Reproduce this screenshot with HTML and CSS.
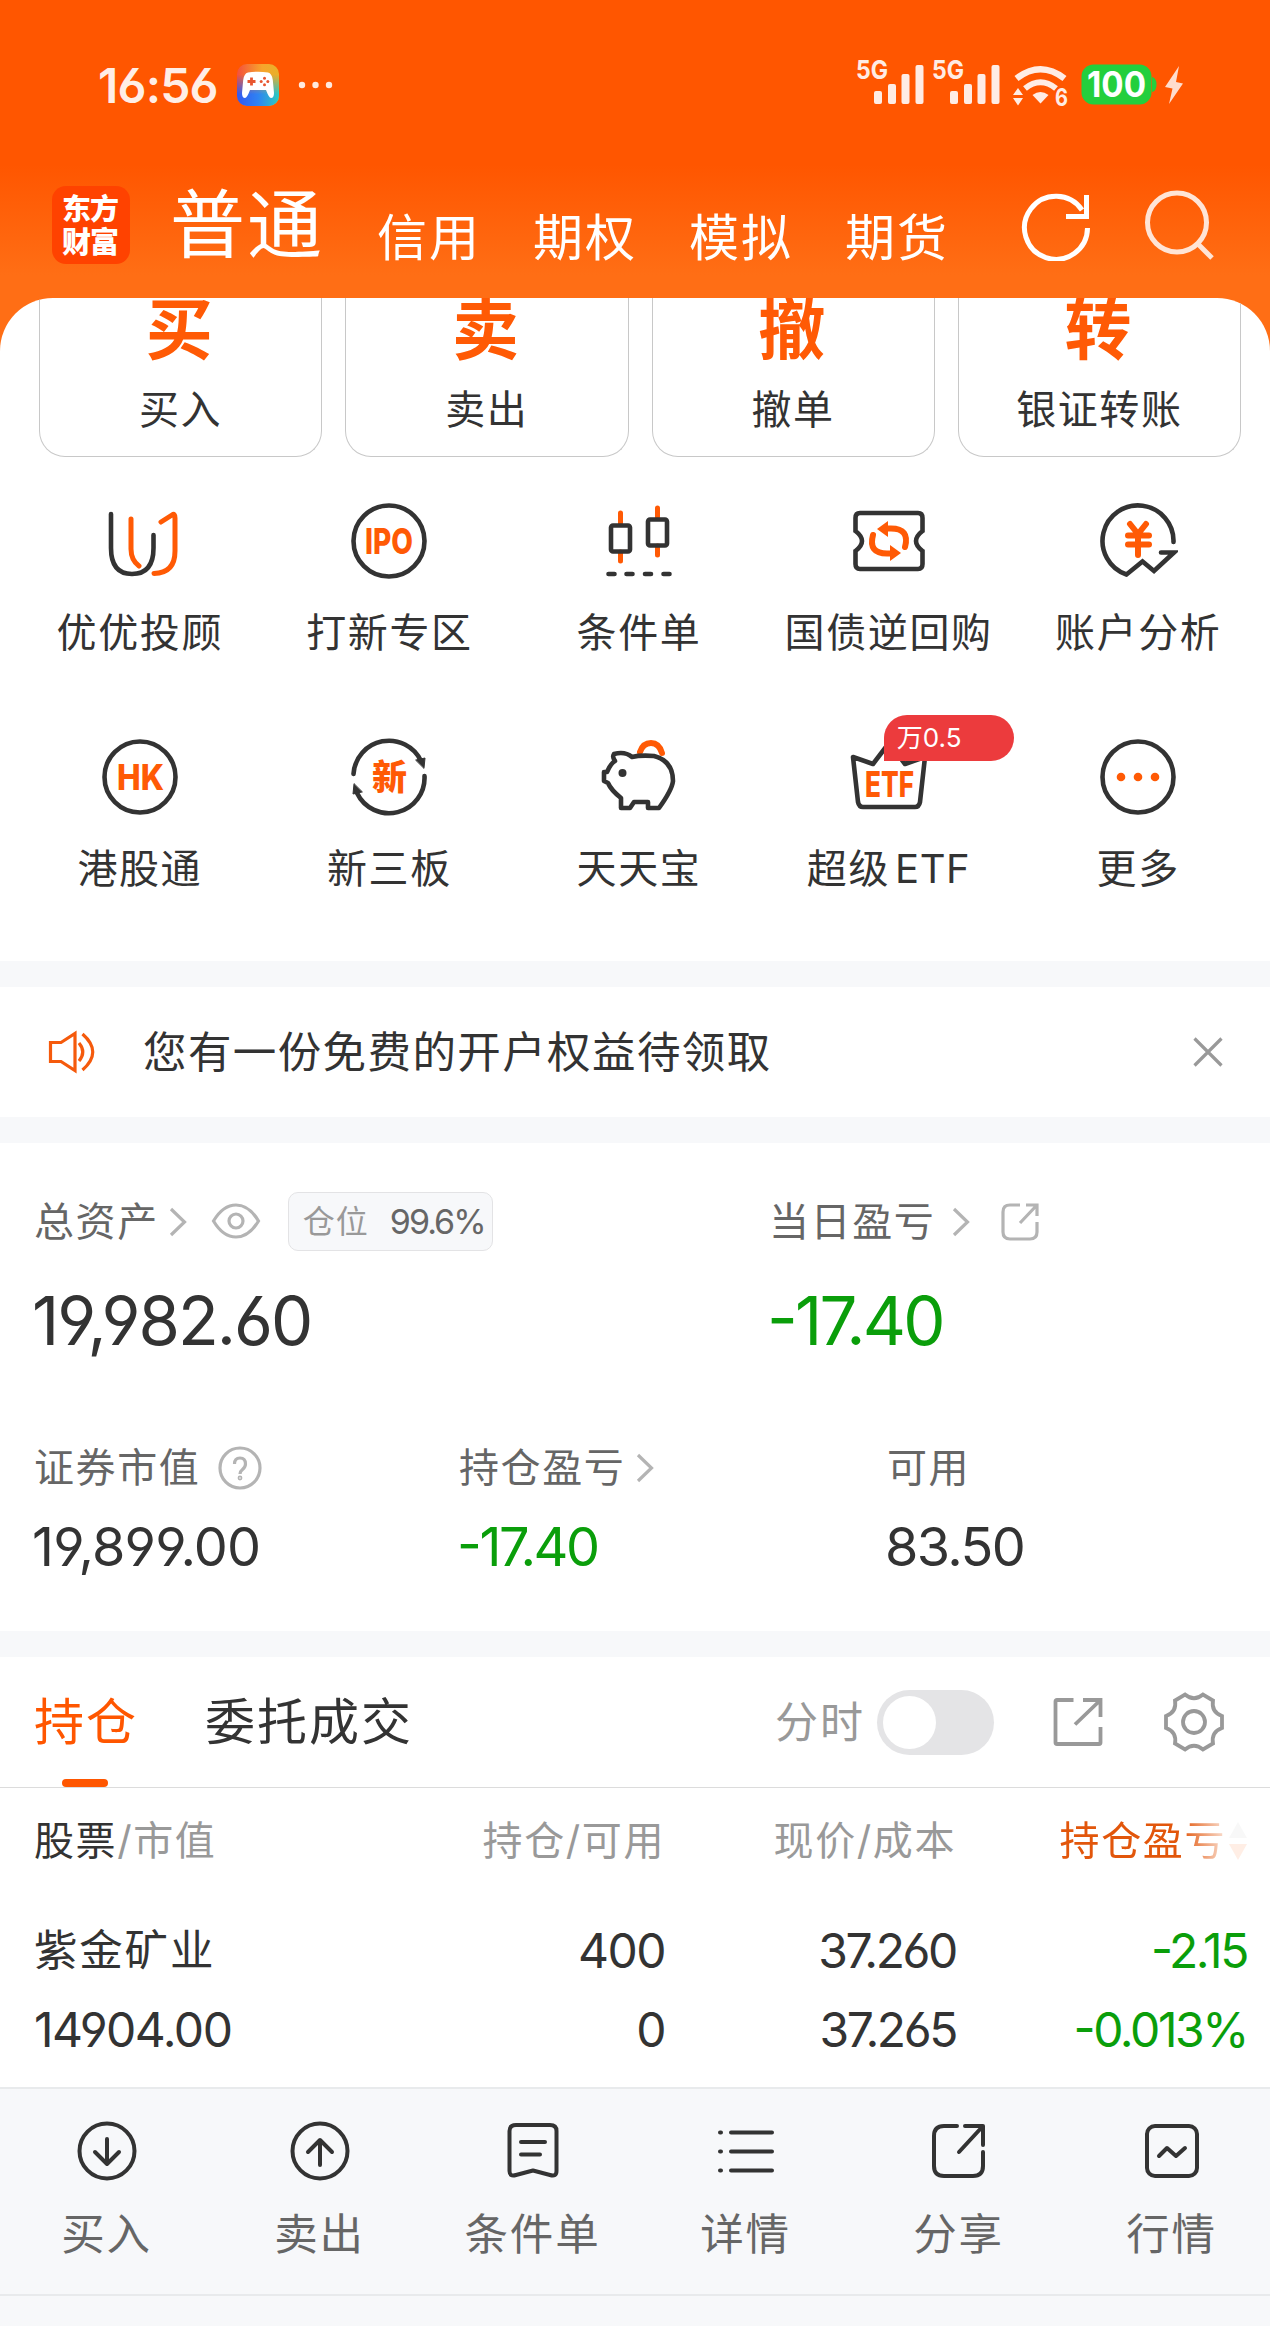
FILE: index.html
```html
<!DOCTYPE html>
<html lang="zh-CN">
<head>
<meta charset="utf-8">
<title>东方财富 交易</title>
<link rel="stylesheet" href="styles.css">
</head>
<body>
<div class="page">
  <header class="top">
    <div class="status">
      <span class="time">16:56</span>
      <svg class="game" viewBox="0 0 42 42" width="42" height="42">
        <defs>
          <linearGradient id="gw" x1="0" y1="0" x2="1" y2="0"><stop offset="0" stop-color="#f4503c"/><stop offset=".6" stop-color="#f7a52c"/><stop offset="1" stop-color="#e8b02a"/></linearGradient>
          <linearGradient id="gc" x1="0" y1="0" x2="1" y2="0"><stop offset="0" stop-color="#3358f0"/><stop offset=".5" stop-color="#2f83f2"/><stop offset="1" stop-color="#2ccbc0"/></linearGradient>
          <linearGradient id="gm" x1="0" y1="0" x2="0" y2="1"><stop offset=".25" stop-color="#fff" stop-opacity="0"/><stop offset=".72" stop-color="#fff"/></linearGradient>
          <mask id="mk"><rect width="42" height="42" fill="url(#gm)"/></mask>
        </defs>
        <rect width="42" height="42" rx="10" fill="url(#gw)"/>
        <rect width="42" height="42" rx="10" fill="url(#gc)" mask="url(#mk)"/>
        <path d="M11 8.500Q21 7 31 8.500Q35 9.500 35.800 16L37 29Q37 34 34 34Q32 34 29 26H13Q10 34 8 34Q5 34 5 29L6.200 16Q7 9.500 11 8.500Z" fill="#fff"/>
        <path d="M14.500 13.500v8M10.500 17.500h8" stroke="#e8562f" stroke-width="2.800"/>
        <g fill="#e8562f"><circle cx="27.500" cy="14.200" r="1.500"/><circle cx="27.500" cy="20.800" r="1.500"/><circle cx="24.200" cy="17.500" r="1.500"/><circle cx="30.800" cy="17.500" r="1.500"/></g>
      </svg>
      <svg class="dots" viewBox="0 0 36 8" width="36" height="8" fill="#ffe9df"><circle cx="4" cy="4" r="3.200"/><circle cx="17.500" cy="4" r="3.200"/><circle cx="31" cy="4" r="3.200"/></svg>
      <svg class="signals" viewBox="858 44 330 78" width="330" height="78" fill="#ffece4">
        <text class="net" x="858" y="79" textLength="32" lengthAdjust="spacingAndGlyphs">5G</text>
        <rect x="876" y="91" width="8" height="13" rx="2"/><rect x="890" y="84" width="8" height="20" rx="2"/><rect x="903.500" y="74" width="8" height="30" rx="2"/><rect x="917.500" y="65" width="8" height="39" rx="2"/>
        <text class="net" x="934" y="79" textLength="32" lengthAdjust="spacingAndGlyphs">5G</text>
        <rect x="952" y="91" width="8" height="13" rx="2"/><rect x="966" y="84" width="8" height="20" rx="2"/><rect x="979.500" y="74" width="8" height="30" rx="2"/><rect x="993.500" y="65" width="8" height="39" rx="2"/>
        <path d="M1018.500 78.500Q1042.500 60 1066.500 78.500" fill="none" stroke="#ffece4" stroke-width="6.500"/>
        <path d="M1027 88.500Q1042.500 76 1058 88.500" fill="none" stroke="#ffece4" stroke-width="6"/>
        <path d="M1034.500 95Q1042.500 89 1050.500 95L1042.500 103.500Z"/>
        <path d="M1015 95L1020 88L1025 95ZM1015 98L1020 105.500L1025 98Z"/>
        <text class="six" x="1057" y="106" textLength="13" lengthAdjust="spacingAndGlyphs">6</text>
        <rect x="1083.500" y="64.500" width="70" height="40" rx="12" fill="#23cf3d"/><path d="M1154 77q4.500 1 4.500 7.500t-4.500 7.500z" fill="#23cf3d"/>
        <text class="bat" x="1089" y="97" textLength="59" lengthAdjust="spacingAndGlyphs">100</text>
        <path d="M1181 66L1167 87L1174.500 88.500L1171 104L1185 83.500L1178 82Z" fill="#ffdccd"/>
      </svg>
    </div>
    <nav class="nav">
      <div class="logo"><span>东方</span><span>财富</span></div>
      <span class="nav-main">普通</span>
      <span class="nav-item">信用</span>
      <span class="nav-item">期权</span>
      <span class="nav-item">模拟</span>
      <span class="nav-item">期货</span>
      <svg class="refresh" viewBox="0 0 70 70" width="70" height="70" fill="none" stroke="#fff" stroke-width="5"><path d="M66.500 37A31.500 31.500 0 1 1 61 19"/><path d="M65.500 4V25.500H45"/></svg>
      <svg class="search" viewBox="0 0 72 72" width="72" height="72" fill="none" stroke="#ffe4d6" stroke-width="5"><circle cx="32" cy="33.500" r="29.500"/><path d="M53 55L67 69"/></svg>
    </nav>
  </header>

  <main class="sheet">
    <div class="cards">
      <div class="card"><b>买</b><span>买入</span></div>
      <div class="card"><b>卖</b><span>卖出</span></div>
      <div class="card"><b>撤</b><span>撤单</span></div>
      <div class="card"><b>转</b><span>银证转账</span></div>
    </div>
    <div class="grid">
      <div class="cell"><svg class="ico" viewBox="-40 -40 80 80"><path d="M-29-27V7Q-29 33-8 33Q13.500 33 13.500 7V-6"/><path class="o" d="M-9-22V8Q-9 19-1 25M21-19L32-26Q35-28 35-23V10Q35 32 14 32.500"/></svg><span>优优投顾</span></div>
      <div class="cell"><svg class="ico" viewBox="-40 -40 80 80"><circle r="35.500"/><text x="-24" y="12.500" class="it" textLength="48" lengthAdjust="spacingAndGlyphs">IPO</text></svg><span>打新专区</span></div>
      <div class="cell"><svg class="ico" viewBox="-40 -40 80 80"><path class="o" d="M-18.500-28V-17M-18.500 11V20M18.500-33V-24M18.500 5V14"/><rect x="-28" y="-15.500" width="19" height="26" rx="2"/><rect x="9" y="-21.500" width="19" height="26" rx="2"/><path d="M-30.500 33h6M-12.500 33h6M6 33h6M24.500 33h6"/></svg><span>条件单</span></div>
      <div class="cell"><svg class="ico" viewBox="-40 -40 80 80"><path d="M-29-28H29Q33.500-28 33.500-23V-10Q27-5 27 0Q27 5 33.500 10V23Q33.500 28 29 28H-29Q-33.500 28-33.500 23V10Q-27 5-27 0Q-27-5-33.500-10V-23Q-33.500-28-29-28Z"/><path class="o thick" d="M-16-6Q-21 12.500-2 12.500H3M16 6Q21-12.500 2-12.500H-3"/><path class="of" d="M1 4L12 12L1 20ZM-1-4L-12-12L-1-20Z"/></svg><span>国债逆回购</span></div>
      <div class="cell"><svg class="ico" viewBox="-40 -40 80 80"><path d="M35.500 1A35.500 35.500 0 1 0-11.500 33.500L4.500 20.500L16 30L36 11.500H23"/><path class="o thick" d="M-8-17L0-7L8-17M0-7V14M-10-5.500H11M-10 3.500H11"/></svg><span>账户分析</span></div>
      <div class="cell"><svg class="ico" viewBox="-40 -40 80 80"><circle r="35.500"/><text x="-23" y="12.500" class="it" textLength="47" lengthAdjust="spacingAndGlyphs">HK</text></svg><span>港股通</span></div>
      <div class="cell"><svg class="ico" viewBox="-40 -40 80 80"><path d="M-35.500-3A35.500 35.500 0 0 1 32-16M35.500-1A35.500 35.500 0 0 1-32 16"/><path d="M27-17L36-19L35-9ZM-27 15L-36 17L-35 7Z" fill="#333" stroke-width="1"/><text x="-17" y="13" class="xin">新</text></svg><span>新三板</span></div>
      <div class="cell"><svg class="ico" viewBox="-40 -40 80 80"><path class="o thick" d="M1-25Q4-34 12-34Q20-34 23-24"/><path stroke-linejoin="round" d="M-25-23Q-14-26-7-20Q1-22 15-21Q34-16 34 4Q33 13 20 31H9V25H-5L-9 31H-18V21Q-28 13-31 6L-35 4V-5H-32Q-28-14-24-16Q-27-20-25-23Z"/><circle cx="-16.500" cy="-4" r="4" fill="#333" stroke="none"/></svg><span>天天宝</span></div>
      <div class="cell"><svg class="ico" viewBox="-40 -40 80 80"><path stroke-linejoin="round" d="M-36-20L-16-13L0-34L16-13L36-20L31 25Q30 30 26 30H-26Q-30 30-31 25Z"/><text x="-24" y="20" class="it" textLength="49" lengthAdjust="spacingAndGlyphs">ETF</text></svg><span>超级<span class="latin">ETF</span></span><i class="promo">万0.5</i></div>
      <div class="cell"><svg class="ico" viewBox="-40 -40 80 80"><circle r="35.500"/><g class="of"><circle cx="-17" r="4.300"/><circle r="4.300"/><circle cx="17" r="4.300"/></g></svg><span>更多</span></div>
    </div>
  </main>

  <section class="notice">
    <svg viewBox="0 0 50 50" width="50" height="50" fill="none" stroke="#f55a0c" stroke-width="3.200"><path d="M4.500 15.500H15L29 6.500V43.500L15 34.500H4.500Z"/><path d="M33 16Q40.500 25 33 34M36.500 7Q57 25 36.500 43"/></svg>
    <p>您有一份免费的开户权益待领取</p>
    <svg class="close" viewBox="0 0 30 30" width="30" height="30" stroke="#999" stroke-width="3.200"><path d="M1.500 1.500L28.500 28.500M28.500 1.500L1.500 28.500"/></svg>
  </section>

  <section class="assets">
    <div class="two">
      <div>
        <div class="label tall">总资产<svg class="chev c1" viewBox="0 0 18 30"><path d="M2 2L15.500 15L2 28"/></svg>
          <svg class="eye" viewBox="0 0 50 36"><path d="M2.500 18Q12 2 25 2T47.500 18Q38 34 25 34T2.500 18Z"/><circle cx="25" cy="18" r="7"/></svg>
          <span class="ratio"><em>仓位</em><span>99.6%</span></span></div>
        <div class="num big">19,982.60</div>
      </div>
      <div>
        <div class="label tall">当日盈亏<svg class="chev c2" viewBox="0 0 18 30"><path d="M2 2L15.500 15L2 28"/></svg>
          <svg class="out" viewBox="0 0 40 40"><path d="M20 3H10Q3 3 3 10V30Q3 37 10 37H30Q37 37 37 30V20M26 3H37V14M37 3L20 21"/></svg></div>
        <div class="num big green tight">-17.40</div>
      </div>
    </div>
    <div class="three">
      <div><div class="label">证券市值<svg class="help" viewBox="0 0 44 44"><circle cx="22" cy="22" r="20"/><path d="M16.500 18Q16.500 12 22 12T27.500 18Q27.500 21 24.500 23.500Q22 25.500 22 28"/><circle cx="22" cy="32" r=".8"/></svg></div><div class="num mid">19,899.00</div></div>
      <div><div class="label">持仓盈亏<svg class="chev c3" viewBox="0 0 18 30"><path d="M2 2L15.500 15L2 28"/></svg></div><div class="num mid green tight">-17.40</div></div>
      <div><div class="label">可用</div><div class="num mid loose">83.50</div></div>
    </div>
  </section>

  <section class="positions">
    <div class="tabs">
      <span class="tab on">持仓</span>
      <span class="tab">委托成交</span>
      <span class="minute">分时</span>
      <span class="switch"></span>
      <svg class="share" viewBox="0 0 50 50" width="50" height="50"><path d="M20.500 3H4Q2.500 3 2.500 4.500V45.500Q2.500 47 4 47H46Q47.500 47 47.500 45.500V30M30 3H47.500V20M47.500 3L22 27.500"/></svg>
      <svg class="gear" viewBox="-30 -30 60 60" width="60" height="60"><path d="M-9-27.500Q0-20 9-27.500L19-21.500Q17-10 28-6V6Q17 10 19 21.500L9 27.500Q0 20-9 27.500L-19 21.500Q-17 10-28 6V-6Q-17-10-19-21.500Z"/><circle r="11"/></svg>
    </div>
    <div class="row head">
      <div><span class="dark">股票</span>/市值</div><div>持仓/可用</div><div>现价/成本</div>
      <div class="fade">持仓盈亏<svg viewBox="0 0 18 38" width="18" height="38"><path d="M9 0L18 16H0Z" fill="#bbb"/><path d="M9 38L18 22H0Z" fill="#ff5600"/></svg></div>
    </div>
    <div class="row"><div class="name">紫金矿业</div><div class="num sm">400</div><div class="num sm narrow">37.260</div><div class="num sm narrow green">-2.15</div></div>
    <div class="row second"><div class="num sm">14904.00</div><div class="num sm">0</div><div class="num sm narrow">37.265</div><div class="num sm narrow green">-0.013%</div></div>
  </section>

  <footer class="bar">
    <div><svg viewBox="-30 -30 60 60"><circle r="27.500"/><path d="M0-12V12M-12 1L0 13L12 1"/></svg><span>买入</span></div>
    <div><svg viewBox="-30 -30 60 60"><circle r="27.500"/><path d="M0 14V-10M-12 1L0-11L12 1"/></svg><span>卖出</span></div>
    <div><svg viewBox="-30 -30 60 60"><path d="M-17-26H17Q23.500-26 23.500-20V20Q23.500 26 17 24L0 19.500L-17 24Q-23.500 26-23.500 20V-20Q-23.500-26-17-26ZM-12-9H12M-12 3.500H7"/></svg><span>条件单</span></div>
    <div><svg viewBox="-30 -30 60 60"><path d="M-15-18.500H26M-15 .5H26M-15 19.500H26M-26-18.500h1M-26 .5h1M-26 19.500h1"/></svg><span>详情</span></div>
    <div><svg viewBox="-30 -30 60 60"><path d="M-2-25H-15Q-25-25-25-15V15Q-25 25-15 25H14Q24 25 24 15V1M6-25H24V-6M24-25L0 1"/></svg><span>分享</span></div>
    <div><svg viewBox="-30 -30 60 60"><rect x="-25" y="-25" width="50" height="50" rx="8"/><path d="M-13 5L-5-3L4 5L13-3"/></svg><span>行情</span></div>
  </footer>
</div>
</body>
</html>
```
FILE: styles.css
```css
* { box-sizing: border-box; }
body { margin: 0; background: #fff; }
.page {
  width: 1270px; height: 2326px; overflow: hidden;
  font-family: "Inter", "Noto Sans CJK SC", sans-serif;
  color: #333; background: #f7f8fa;
}
svg { display: block; flex: none; }

.top {
  height: 351px; margin-bottom: -53px; color: #fff;
  background: linear-gradient(#ff5600 0, #ff5600 165px, #ff6e15 275px, #ff6e15 100%);
}
.status { display: flex; align-items: center; height: 170px; padding-left: 98px; }
.time { font-size: 48px; font-weight: 600; width: 139px; letter-spacing: -.8px; line-height: 50px; color: #ffeee6; margin-top: 2px; font-feature-settings: "cv03", "cv04"; }
.dots { margin-left: 19px; }
.signals { margin-left: 522px; margin-top: -4px; }
.net { font-size: 26px; font-weight: 700; }
.six { font-size: 24px; font-weight: 700; }
.bat { font-size: 35px; font-weight: 700; fill: #fff; }
.nav { display: flex; height: 128px; padding-left: 52px; }
.logo {
  width: 78px; height: 78px; border-radius: 14px; background: #ff4200;
  margin: 16px 40px 0 0; padding: 7px 2px 0 0; text-align: center;
  font-size: 29px; line-height: 33px; font-weight: 900; letter-spacing: -1px;
}
.logo span { display: block; }
.nav-main { width: 207px; font-size: 75px; line-height: 80px; margin-top: 15px; letter-spacing: 2px; }
.nav-item { width: 156px; font-size: 50px; line-height: 60px; margin-top: 38px; letter-spacing: 2px; }
.refresh { margin: 21px 0 0 20px; }
.search { margin: 19px 0 0 54px; }

.sheet { height: 663px; background: #fff; border-radius: 53px 53px 0 0; overflow: hidden; }
.cards { display: flex; gap: 23px; padding: 0 29px 0 39px; }
.card {
  flex: 1; height: 159px; overflow: hidden; text-align: center;
  border: 1px solid #c8c8c8; border-top: 0; border-radius: 0 0 26px 26px;
}
.card b { display: block; font-size: 67px; line-height: 66px; height: 66px; color: #ff5a05; margin-top: -1px; padding-right: 3px; }
.card span { display: block; font-size: 40px; line-height: 50px; margin-top: 22px; letter-spacing: 1.600px; }
.grid { display: grid; grid-template-columns: repeat(5, 1fr); grid-auto-rows: 236px; padding: 44px 7px 0 15px; }
.cell { position: relative; display: flex; flex-direction: column; align-items: center; }
.cell > span { font-size: 40px; line-height: 50px; letter-spacing: 1.600px; margin-top: 27px; white-space: nowrap; }
.latin { margin-left: 5px; letter-spacing: .6px; }
.ico { width: 80px; height: 80px; fill: none; stroke: #333; stroke-width: 4.600; stroke-linecap: round; }
.ico .o { stroke: #ff5a05; stroke-width: 5; }
.ico .thick { stroke-width: 6; }
.ico .of { fill: #ff5a05; stroke: none; }
.ico text { stroke: none; fill: #ff5a05; }
.it { font-size: 35px; font-weight: 800; }
.xin { font-size: 35px; font-weight: 900; }
.promo {
  position: absolute; left: 120px; top: -22px; width: 130px; height: 46px;
  background: #ec3b3d; color: #fff; border-radius: 23px 23px 23px 0;
  font-style: normal; font-size: 26px; line-height: 46px; padding-left: 13px;
}

.notice { display: flex; align-items: center; height: 130px; margin-top: 26px; padding-left: 46px; background: #fff; }
.notice p { margin: 0 0 0 47px; font-size: 43.500px; letter-spacing: 1.400px; width: 1050px; line-height: 60px; }

.assets { height: 488px; margin-top: 26px; background: #fff; padding: 49px 0 0 34px; }
.two { display: grid; grid-template-columns: 735px 1fr; }
.three { display: grid; grid-template-columns: 425px 428px 1fr; margin-top: 85px; }
.label { display: flex; align-items: center; height: 44px; line-height: 44px; font-size: 40px; letter-spacing: 1.600px; color: #666; white-space: nowrap; }
.label.tall { height: 59px; }
.label svg { fill: none; stroke: #b4b4b4; stroke-width: 3.200; }
.chev { width: 18px; height: 30px; }
.c1 { margin-left: 10px; }
.c2 { margin-left: 17px; }
.c3 { margin-left: 11px; }
.label .eye { width: 50px; height: 36px; margin-left: 24px; margin-top: -2px; }
.out { width: 40px; height: 40px; margin-left: 30px; }
.help { width: 44px; height: 44px; margin-left: 18px; }
.ratio {
  display: flex; align-items: center; width: 205px; height: 59px; margin-left: 27px; padding-left: 14px;
  background: #f7f8fa; border: 1px solid #e3e3e5; border-radius: 10px; font-size: 34px; letter-spacing: -2px;
}
.ratio em { font-style: normal; font-size: 32px; letter-spacing: 1px; color: #999; margin-right: 21px; }
.num { white-space: nowrap; font-feature-settings: "cv03", "cv04", "case"; }
.big { font-size: 67px; line-height: 80px; margin: 30px 0 0 -2px; letter-spacing: -2px; }
.mid { font-size: 54px; line-height: 50px; margin: 32px 0 0 -2px; letter-spacing: -.8px; }
.loose { letter-spacing: -1.600px; }
.green { color: #0a9e0a; }
.big.tight { letter-spacing: -2.800px; }
.mid.tight { letter-spacing: -2.400px; }

.positions { height: 430px; margin-top: 26px; background: #fff; }
.tabs { display: flex; align-items: center; height: 131px; padding-left: 34px; border-bottom: 1px solid #dcdcdc; }
.tab { position: relative; font-size: 50px; letter-spacing: 2px; line-height: 60px; margin-right: 67px; }
.tab.on { color: #ff5600; }
.tab.on::after { content: ""; position: absolute; left: 28px; top: 87px; width: 46px; height: 8px; border-radius: 4px; background: #ff5600; }
.minute { font-size: 43px; letter-spacing: 2px; line-height: 60px; color: #999; margin-left: 295px; }
.switch { width: 117px; height: 65px; border-radius: 33px; background: #e4e4e6; margin-left: 12px; padding: 6px; }
.switch::before { content: ""; display: block; width: 53px; height: 53px; border-radius: 50%; background: #fff; }
.tabs svg { fill: none; stroke: #999; stroke-width: 3.800; }
.share { margin-left: 59px; }
.gear { margin-left: 61px; }
.row { display: grid; grid-template-columns: 401px 230px 291px 291px; padding-left: 34px; height: 44px; line-height: 44px; text-align: right; white-space: nowrap; }
.row > :first-child { text-align: left; }
.row.head { height: 140px; line-height: 105px; font-size: 40px; letter-spacing: 1.600px; color: #999; }
.dark { color: #333; }
.row.second { margin-top: 35px; }
.name { font-size: 43.500px; letter-spacing: 1.800px; }
.sm { font-size: 48px; letter-spacing: -1.500px; line-height: 46px; }
.narrow { letter-spacing: -2.400px; }
.fade {
  display: flex; justify-content: flex-end; align-items: center; height: 105px; gap: 3px; color: #e2560b;
  -webkit-mask-image: linear-gradient(90deg, #000 225px, rgba(0,0,0,.1) 274px);
  mask-image: linear-gradient(90deg, #000 225px, rgba(0,0,0,.1) 274px);
}

.bar { display: grid; grid-template-columns: repeat(6, 213px); height: 209px; border-top: 2px solid #e8eaec; border-bottom: 2px solid #e8eaec; }
.bar div { display: flex; flex-direction: column; align-items: center; padding-top: 32px; }
.bar svg { width: 60px; height: 60px; fill: none; stroke: #333; stroke-width: 4; stroke-linecap: round; stroke-linejoin: round; }
.bar span { font-size: 43.500px; line-height: 60px; margin-top: 23px; letter-spacing: 1.800px; color: #666; }
```
